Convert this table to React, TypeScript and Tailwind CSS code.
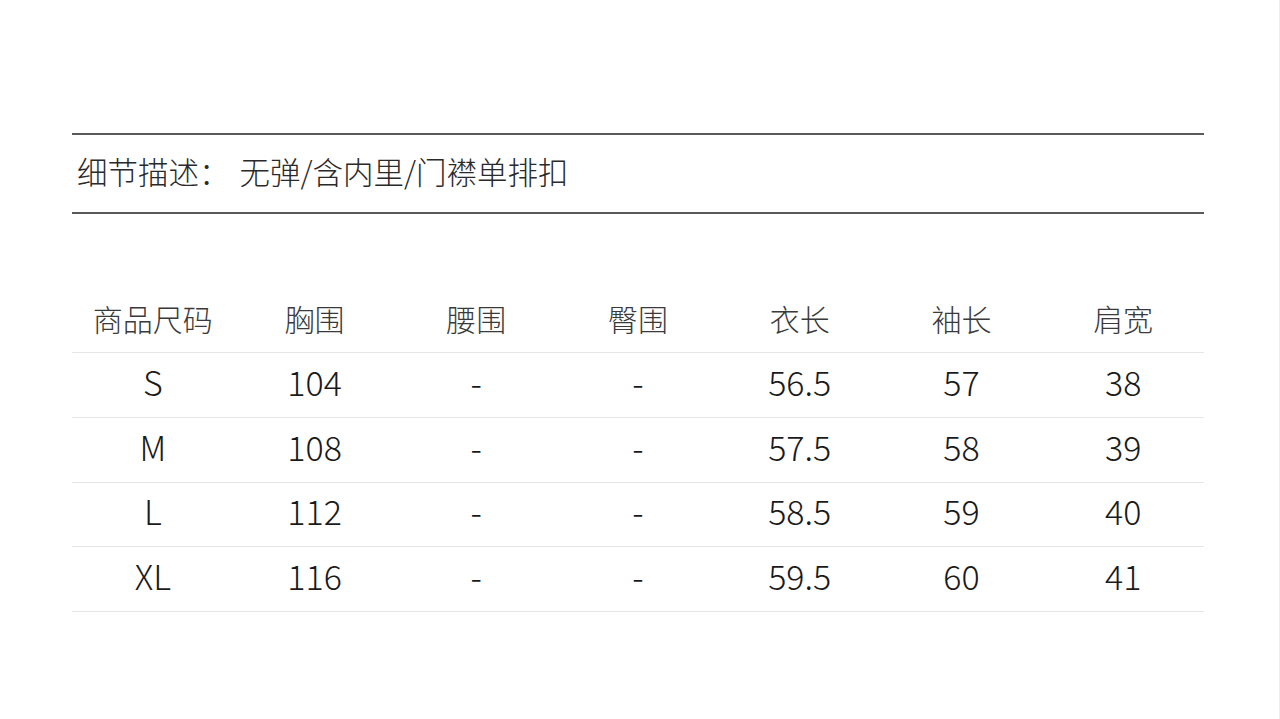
import React from 'react';

const headers = ['商品尺码', '胸围', '腰围', '臀围', '衣长', '袖长', '肩宽'];

const rows: string[][] = [
  ['S', '104', '-', '-', '56.5', '57', '38'],
  ['M', '108', '-', '-', '57.5', '58', '39'],
  ['L', '112', '-', '-', '58.5', '59', '40'],
  ['XL', '116', '-', '-', '59.5', '60', '41'],
];

export default function App() {
  return (
    <div
      className="w-[1280px] h-[719px] bg-white border-r border-[#eeeeee] overflow-hidden"
      style={{ fontFamily: '"Noto Sans CJK SC", "Noto Sans", sans-serif' }}
    >
      <div className="pl-[72px] pr-[75px] pt-[133px]">
        {/* detail description */}
        <div className="h-[81px] border-y-2 border-[#5a5a5a] flex items-center pl-[5px] text-[30.5px] font-light text-[#2a2a2a]">
          <span className="-mt-[4px]">细节描述：</span>
          <span className="ml-[10px] -mt-[4px]">无弹/含内里/门襟单排扣</span>
        </div>

        {/* size table */}
        <div className="mt-[74px]">
          <div className="grid grid-cols-7 h-[65px] border-b border-[#e6e6e6] items-center text-[30px] font-light text-[#3a3a3a]">
            {headers.map((h) => (
              <div key={h} className="text-center -mt-[4px]">
                {h}
              </div>
            ))}
          </div>
          {rows.map((r) => (
            <div
              key={r[0]}
              className="grid grid-cols-7 h-[64.75px] border-b border-[#e6e6e6] items-center text-[34px] font-light text-[#1a1a1a]"
            >
              {r.map((c, i) => (
                <div key={i} className="text-center -mt-[7px]">
                  {c}
                </div>
              ))}
            </div>
          ))}
        </div>
      </div>
    </div>
  );
}
